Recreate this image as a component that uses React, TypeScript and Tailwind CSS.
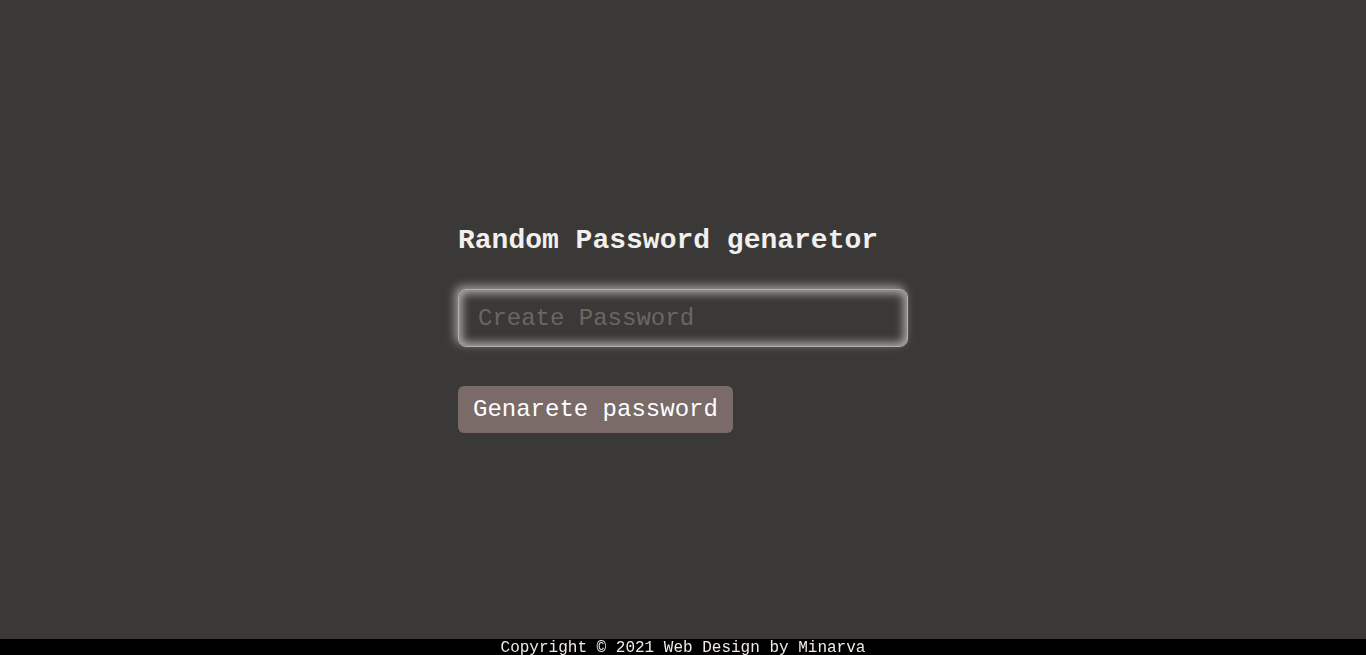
import React from 'react';

export default function App() {
  return (
    <div className="relative h-screen w-full bg-[#3b3937] flex items-center justify-center" style={{ fontFamily: "'Liberation Mono', 'Courier New', monospace" }}>
      {/* Generator card */}
      <div className="w-[450px] flex flex-col">
        <h1 className="text-[28px] leading-[32px] font-bold text-[#f2f0ee] pt-[2px]">Random Password genaretor</h1>
        <input
          type="text"
          placeholder="Create Password"
          className="mt-[32px] h-[58px] w-full rounded-lg bg-[#3b3937] pl-[19px] pr-5 pt-[2px] text-[24px] text-[#ddd] placeholder:text-[#6b6663] outline-none border border-[#b3afac] shadow-[-3px_-3px_10px_rgba(255,255,255,0.5),inset_0_0_10px_3px_rgba(255,255,255,0.6)]"
        />
        <div className="mt-[39px]">
          <button className="h-[47px] rounded-md bg-[#7a6a68] px-[15px] pt-[2px] text-[24px] text-white">Genarete password</button>
        </div>
      </div>

      {/* Footer */}
      <footer className="fixed bottom-0 left-0 right-0 h-4 bg-black text-center text-[16px] leading-4 pt-[1px] text-[#f0ebe3]">
        Copyright © 2021 Web Design by Minarva
      </footer>
    </div>
  );
}
